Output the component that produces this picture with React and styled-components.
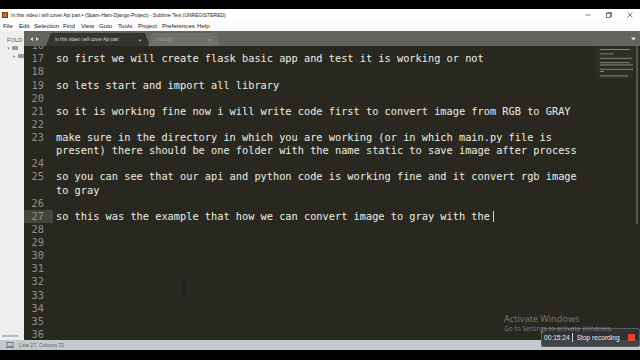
import React from "react";
import styled, { createGlobalStyle } from "styled-components";

const Global = createGlobalStyle`
  html, body { margin: 0; padding: 0; background: #000; overflow: hidden; }
  #root { width: 640px; height: 360px; }
`;

const Screen = styled.div`
  position: relative;
  width: 640px;
  height: 360px;
  display: flex;
  flex-direction: column;
  background: #000;
  font-family: "Liberation Sans", Arial, sans-serif;
  overflow: hidden;
`;

const Letterbox = styled.div`
  height: ${(p) => p.h}px;
  background: #000;
  flex: none;
`;

const TitleBar = styled.div`
  height: 11px;
  flex: none;
  background: #fff;
  display: flex;
  align-items: center;
  padding-left: 2px;
  font-size: 5px;
  color: #222;
  gap: 3px;
`;

const AppIcon = styled.div`
  width: 6px;
  height: 6px;
  background: #d2691e;
  border: 0.5px solid #7a3d10;
  box-sizing: border-box;
`;

const Controls = styled.div`
  margin-left: auto;
  display: flex;
  align-items: center;
  height: 100%;
`;

const Ctrl = styled.div`
  width: 21px;
  height: 11px;
  display: flex;
  align-items: center;
  justify-content: center;
`;

const MenuBar = styled.div`
  height: 10px;
  flex: none;
  background: #fcfcfc;
  display: flex;
  align-items: center;
  padding-left: 3px;
  font-size: 6.1px;
  color: #222;
`;

const MenuItem = styled.span`
  width: ${(p) => p.w}px;
  flex: none;
`;

const Gap = styled.div`
  height: 1px;
  flex: none;
  background: #fcfcfc;
`;

const Body = styled.div`
  flex: 1;
  display: flex;
  min-height: 0;
`;

const Sidebar = styled.div`
  width: 24px;
  flex: none;
  background: #eeeeee;
  display: flex;
  flex-direction: column;
  padding-top: 5px;
  box-sizing: border-box;
  font-size: 5.5px;
  color: #555;
  overflow: hidden;
`;

const SideLabel = styled.div`
  padding-left: 7px;
  height: 8px;
  line-height: 8px;
  white-space: nowrap;
  overflow: hidden;
  letter-spacing: 0.2px;
`;

const TreeRow = styled.div`
  display: flex;
  align-items: center;
  gap: 2px;
  padding-left: ${(p) => p.indent}px;
  height: 8px;
`;

const Folder = styled.div`
  width: 6px;
  height: 4px;
  background: #9a9a9a;
  border-radius: 0.5px;
`;

const SideScroll = styled.div`
  margin-top: auto;
  margin-bottom: 3px;
  margin-left: 2px;
  width: 16px;
  height: 2px;
  background: #b8b8b8;
`;

const Main = styled.div`
  flex: 1;
  display: flex;
  flex-direction: column;
  min-width: 0;
`;

const TabBar = styled.div`
  height: 15px;
  flex: none;
  background: #62645d;
  display: flex;
  align-items: flex-end;
`;

const Arrows = styled.div`
  width: 22px;
  height: 15px;
  padding-left: 6px;
  box-sizing: border-box;
  display: flex;
  align-items: center;
  gap: 3px;
  align-self: center;
`;

const Tab = styled.div`
  height: 13px;
  width: ${(p) => p.w}px;
  flex: none;
  background: ${(p) => (p.active ? "#34352e" : "#6f716a")};
  clip-path: polygon(5px 0, calc(100% - 5px) 0, 100% 100%, 0 100%);
  display: flex;
  align-items: center;
  padding: 0 9px;
  box-sizing: border-box;
  font-size: 4.6px;
  color: ${(p) => (p.active ? "#d8d8d0" : "#9a9c94")};
  white-space: nowrap;
  margin-right: -2px;
`;

const TabMark = styled.span`
  margin-left: auto;
  font-size: ${(p) => (p.dot ? 6 : 5)}px;
  color: ${(p) => (p.dot ? "#d8d8d0" : "#b0b2aa")};
`;

const Dropdown = styled.svg`
  margin-left: auto;
  align-self: center;
  margin-right: 4px;
`;

const Editor = styled.div`
  flex: 1;
  background: #282821;
  position: relative;
  overflow: hidden;
  font-family: "DejaVu Sans Mono", "Liberation Mono", monospace;
  font-size: 10.3px;
`;

const Lines = styled.div`
  margin-top: -6.8px;
  display: flex;
  flex-direction: column;
`;

const Row = styled.div`
  display: flex;
  height: 13.14px;
  line-height: 13.14px;
  white-space: pre;
`;

const Num = styled.div`
  width: 29px;
  flex: none;
  box-sizing: border-box;
  padding-right: 9px;
  text-align: right;
  color: #8e8f88;
  background: ${(p) => (p.hl ? "#45453c" : "transparent")};
`;

const Code = styled.div`
  padding-left: 3px;
  color: #ecece4;
`;

const Caret = styled.span`
  display: inline-block;
  width: 1px;
  height: 11px;
  background: #cfcfc8;
  vertical-align: middle;
  margin-left: 3px;
`;

const Minimap = styled.svg`
  position: absolute;
  right: 6px;
  top: 1px;
`;

const ScrollThumb = styled.div`
  position: absolute;
  right: 2px;
  top: 0;
  width: 2px;
  height: 178px;
  background: #56564f;
`;

const MouseCursor = styled.svg`
  position: absolute;
  left: 158px;
  top: 238px;
`;

const StatusBar = styled.div`
  height: 10px;
  flex: none;
  background: #c4c9ce;
  display: flex;
  align-items: center;
  padding-left: 6px;
  gap: 5px;
  font-size: 5.2px;
  line-height: 10px;
  color: #5a5e62;
`;

const Watermark = styled.div`
  position: absolute;
  z-index: 2;
  left: 504px;
  top: 314px;
  font-family: "Open Sans", "Noto Sans", sans-serif;
  color: rgba(230, 230, 230, 0.42);
  line-height: 1;
`;

const WmTitle = styled.div`
  font-size: 9.2px;
`;

const WmSub = styled.div`
  font-size: 6.6px;
  margin-top: 3px;
  white-space: nowrap;
`;

const Recorder = styled.div`
  position: absolute;
  z-index: 1;
  left: 541px;
  top: 328px;
  width: 99px;
  height: 19px;
  box-sizing: border-box;
  background: rgba(48, 50, 52, 0.88);
  border: 1px solid #5a5d60;
  border-radius: 2px;
  display: flex;
  align-items: center;
  padding-left: 2px;
  font-family: "Liberation Sans", Arial, sans-serif;
  font-size: 6.6px;
  color: #f2f2f2;
`;

const Timer = styled.span`
  padding-right: 2px;
  border-right: 1px solid #cfcfcf;
  line-height: 9px;
`;

const StopLabel = styled.span`
  margin-left: 4px;
`;

const StopBtn = styled.div`
  margin-left: auto;
  margin-right: 4px;
  width: 7px;
  height: 7px;
  background: #e0452f;
`;

const lines = [
  { n: 16, t: "" },
  { n: 17, t: "so first we will create flask basic app and test it is working or not" },
  { n: 18, t: "" },
  { n: 19, t: "so lets start and import all library" },
  { n: 20, t: "" },
  { n: 21, t: "so it is working fine now i will write code first to convert image from RGB to GRAY" },
  { n: 22, t: "" },
  { n: 23, t: "make sure in the directory in which you are working (or in which main.py file is" },
  { n: null, t: "present) there should be one folder with the name static to save image after process" },
  { n: 24, t: "" },
  { n: 25, t: "so you can see that our api and python code is working fine and it convert rgb image" },
  { n: null, t: "to gray" },
  { n: 26, t: "" },
  { n: 27, t: "so this was the example that how we can convert image to gray with the", cur: true },
  { n: 28, t: "" },
  { n: 29, t: "" },
  { n: 30, t: "" },
  { n: 31, t: "" },
  { n: 32, t: "" },
  { n: 33, t: "" },
  { n: 34, t: "" },
  { n: 35, t: "" },
  { n: 36, t: "" },
];

const menu = [
  ["File", 16],
  ["Edit", 15],
  ["Selection", 29],
  ["Find", 18],
  ["View", 18],
  ["Goto", 19],
  ["Tools", 20],
  ["Project", 24],
  ["Preferences", 35],
  ["Help", 20],
];

const miniRows = [
  [4, 30], [0, 0], [4, 14], [0, 0], [4, 32], [0, 0], [4, 30], [4, 33], [0, 0], [4, 33], [4, 4], [0, 0], [4, 28],
];

export default function App() {
  return (
    <Screen>
      <Global />
      <Letterbox h={9} />
      <TitleBar>
        <AppIcon />
        <span>In this video i will cover Api part • (Spam-Ham-Django-Project) - Sublime Text (UNREGISTERED)</span>
        <Controls>
          <Ctrl>
            <svg width="6" height="6" viewBox="0 0 6 6"><path d="M0.5 3h5" stroke="#444" strokeWidth="0.7" /></svg>
          </Ctrl>
          <Ctrl>
            <svg width="6" height="6" viewBox="0 0 6 6" fill="none" stroke="#444" strokeWidth="0.7">
              <rect x="0.5" y="1.5" width="4" height="4" />
              <path d="M1.5 1.5V0.5h4v4h-1" />
            </svg>
          </Ctrl>
          <Ctrl>
            <svg width="6" height="6" viewBox="0 0 6 6"><path d="M0.5 0.5l5 5M5.5 0.5l-5 5" stroke="#444" strokeWidth="0.7" /></svg>
          </Ctrl>
        </Controls>
      </TitleBar>
      <MenuBar>
        {menu.map(([m, w]) => (
          <MenuItem key={m} w={w}>{m}</MenuItem>
        ))}
      </MenuBar>
      <Gap />
      <Body>
        <Sidebar>
          <SideLabel>FOLD</SideLabel>
          <TreeRow indent={7}>
            <svg width="3" height="3" viewBox="0 0 3 3"><path d="M0 0.5h3L1.5 2.5z" fill="#888" /></svg>
            <Folder />
          </TreeRow>
          <TreeRow indent={13}>
            <svg width="3" height="3" viewBox="0 0 3 3"><path d="M0.5 0v3L2.5 1.5z" fill="#888" /></svg>
            <Folder />
          </TreeRow>
          <SideScroll />
        </Sidebar>
        <Main>
          <TabBar>
            <Arrows>
              <svg width="3" height="4" viewBox="0 0 3 4"><path d="M3 0v4L0 2z" fill="#d8d8d0" /></svg>
              <svg width="3" height="4" viewBox="0 0 3 4"><path d="M0 0v4l3-2z" fill="#d8d8d0" /></svg>
            </Arrows>
            <Tab active w={104}>
              In this video i will cover Api part
              <TabMark dot>•</TabMark>
            </Tab>
            <Tab w={72}>
              main.py
              <TabMark>×</TabMark>
            </Tab>
            <Dropdown width="5" height="4" viewBox="0 0 5 4">
              <path d="M0 0.5h5L2.5 3.5z" fill="#e8e8e0" />
            </Dropdown>
          </TabBar>
          <Editor>
            <Lines>
              {lines.map((l, i) => (
                <Row key={i}>
                  <Num hl={l.cur}>{l.n ?? ""}</Num>
                  <Code>
                    {l.t}
                    {l.cur && <Caret />}
                  </Code>
                </Row>
              ))}
            </Lines>
            <Minimap width="38" height="32" viewBox="0 0 38 32">
              <rect x="0" y="0" width="38" height="32" fill="#34342d" opacity="0.5" />
              {miniRows.map(([x, w], i) =>
                w ? <rect key={i} x={x} y={2 + i * 2.2} width={w} height="1" fill="#a8a8a0" opacity="0.7" /> : null
              )}
            </Minimap>
            <ScrollThumb />
            <MouseCursor width="4" height="9" viewBox="0 0 4 9">
              <path d="M0.5 0.5h3M2 0.5v8M0.5 8.5h3" stroke="#111" strokeWidth="0.9" fill="none" />
            </MouseCursor>
          </Editor>
        </Main>
      </Body>
      <StatusBar>
        <svg width="8" height="6" viewBox="0 0 8 6" fill="none" stroke="#5a5e62" strokeWidth="0.7">
          <rect x="1" y="0.5" width="6" height="4" />
          <path d="M0 5.5h8" />
        </svg>
        <span>Line 27, Column 72</span>
      </StatusBar>
      <Letterbox h={10} />
      <Watermark>
        <WmTitle>Activate Windows</WmTitle>
        <WmSub>Go to Settings to activate Windows.</WmSub>
      </Watermark>
      <Recorder>
        <Timer>00:15:24</Timer>
        <StopLabel>Stop recording</StopLabel>
        <StopBtn />
      </Recorder>
    </Screen>
  );
}
